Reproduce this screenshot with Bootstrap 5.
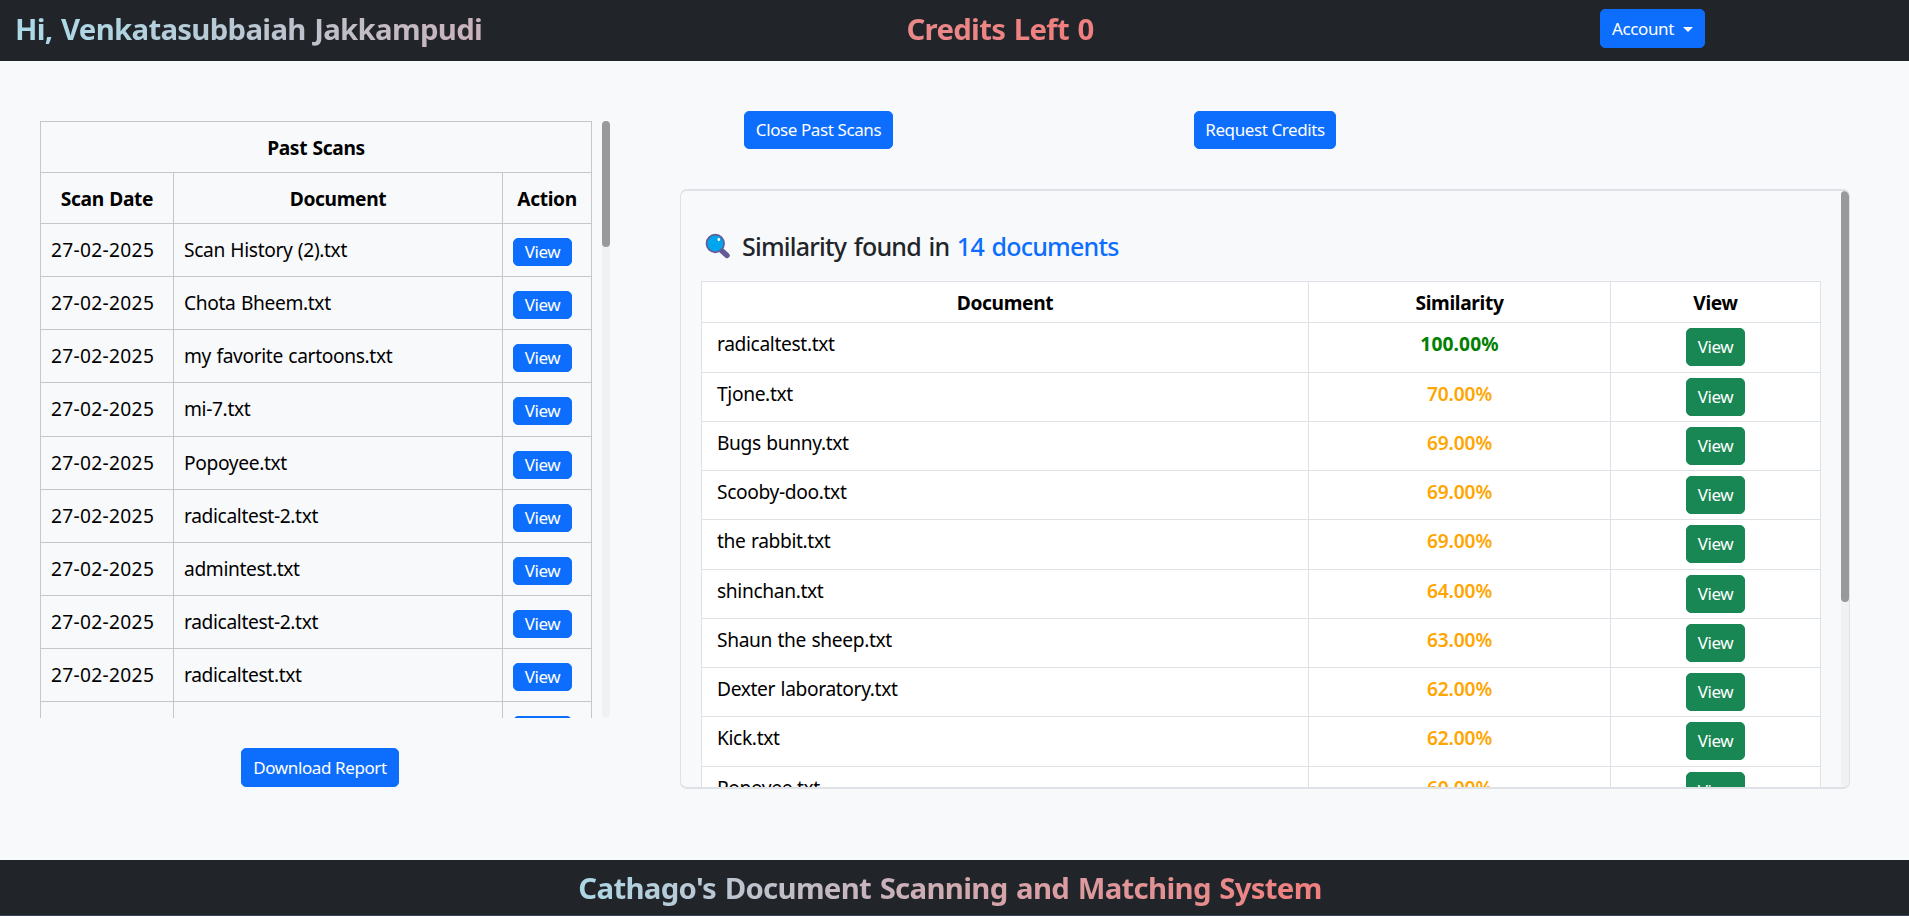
<!DOCTYPE html>
<html lang="en">
<head>
<meta charset="utf-8">
<title>Document Scanning</title>
<link rel="stylesheet" href="https://cdn.jsdelivr.net/npm/bootstrap@5.3.0/dist/css/bootstrap.min.css">
<style>
html{font-size:20px}
body{height:916px;overflow:hidden;background:#f8f9fb;font-family:"Noto Sans",sans-serif;font-size:19.2px;line-height:30px;letter-spacing:-.36px;word-spacing:.8px;color:#212529}
.topbar{height:61px}
.brand-text{font-size:29.4px;font-weight:700;line-height:36px;letter-spacing:-.72px;word-spacing:1.6px;background-image:linear-gradient(to right,lightblue 30%,lightcoral 68%);-webkit-background-clip:text;background-clip:text;color:transparent}
.topbar .brand-text{padding-top:11px}
.topbar .hello{width:636px;padding-left:15px;background-image:linear-gradient(to right,lightblue 10%,lightcoral 160%)}
.topbar .credits{width:637px;padding-left:91px;background-image:linear-gradient(to right,lightblue -150%,lightcoral 65%)}
.topbar .account{width:636px;padding-left:327px}
.btn{padding:4px 10px;font-size:17px;border-radius:5px;line-height:28px;letter-spacing:-.4px;height:38px;white-space:nowrap}
.left-col{padding-top:60px}
.past-pane{width:570px;height:597px;margin-left:40px;overflow:hidden}
.past{width:551px;table-layout:fixed;margin:0;--bs-table-bg:#f8f9fb;border-color:#c6c7c8;color:#000}
.past th,.past td{padding:11px 10px 9px;height:53px}
.past tbody tr:nth-child(4) td{height:54px}
.past th{height:51px;text-align:center}
.past td:first-child{letter-spacing:.3px}
.past .btn{height:28px;padding:0;width:59px;line-height:26px;display:block;margin-top:3px}
.track{width:8px;background:#f1f1f1;border-radius:5px}
.thumb{background:#999;border-radius:5px;width:8px}
.past-thumb{height:126px}
.sim-thumb{height:411px}
.acc{width:105px;margin-top:9px;height:39px}
.acc::after{margin-left:9px;vertical-align:3px}
.download{margin:30px 0 0 241px}
.download .btn{width:158px;height:39px}
.actions{padding:50px 0 0 134px;height:128px}
.close-scans{width:149px}
.request{width:142px;margin-left:301px}
.result{width:1170px;height:600px;margin-left:70px;border:1px solid #dee2e6;border-width:2px 1px;border-radius:7px;overflow:hidden}
.result-body{margin-left:20px}
.result h4{font-size:25px;line-height:30px;font-weight:500;letter-spacing:-.78px;word-spacing:1.8px;margin:40px 0 20px 4px}
.lens{margin-right:11px}
.sim{width:1119px;table-layout:fixed;margin:0;color:#000;--bs-table-bg:#fff}
.sim th{height:41px;padding:6px 5px 4px;text-align:center}
.sim td{height:49px;padding:6px 15px 4px}
.sim tr:nth-child(4n+1) td{height:50px}
.sim td+td{text-align:center;font-weight:600;color:orange;letter-spacing:-.15px}
.sim td.full{color:green;font-weight:700;letter-spacing:.1px}
.sim td:last-child{padding-top:5px}
.sim .btn{width:59px;padding:4px 0;display:block;margin:0 auto;font-weight:400;letter-spacing:-.4px}
.foot{height:56px;border-bottom:1px solid #3a4356}
.foot .brand-text{padding:10px 9px 0 0}
</style>
</head>
<body class="d-flex flex-column">
<nav class="topbar bg-dark d-flex flex-shrink-0">
  <div class="brand-text hello">Hi, Venkatasubbaiah Jakkampudi</div>
  <div class="brand-text credits text-center">Credits Left 0</div>
  <div class="account"><button class="btn btn-primary dropdown-toggle acc">Account</button></div>
</nav>
<main class="d-flex flex-grow-1">
  <section class="left-col">
    <div class="past-pane d-flex justify-content-between">
      <table class="table table-bordered past">
        <colgroup><col style="width:133px"><col style="width:329px"><col style="width:89px"></colgroup>
        <thead><tr><th colspan="3">Past Scans</th></tr><tr><th>Scan Date</th><th>Document</th><th>Action</th></tr></thead>
        <tbody id="pastRows"></tbody>
      </table>
      <div class="track"><div class="thumb past-thumb"></div></div>
    </div>
    <div class="download"><button class="btn btn-primary">Download Report</button></div>
  </section>
  <section>
    <div class="actions d-flex"><button class="btn btn-primary close-scans">Close Past Scans</button><button class="btn btn-primary request">Request Credits</button></div>
    <div class="result d-flex justify-content-between">
      <div class="result-body">
        <h4 class="d-flex align-items-center"><svg class="lens" width="26" height="26" viewBox="0 0 26 26"><path d="M16 17l6 5.5" stroke="#635994" stroke-width="5.4" stroke-linecap="round"/><circle cx="10.3" cy="10.5" r="8.8" fill="#00a6ed" stroke="#635994" stroke-width="1.7"/><ellipse cx="13.8" cy="6.5" rx="1.3" ry="1.7" fill="#fff"/></svg><span>Similarity found in <span class="text-primary">14 documents</span></span></h4>
        <table class="table table-bordered sim">
          <colgroup><col style="width:607px"><col style="width:302px"><col style="width:210px"></colgroup>
          <thead><tr><th>Document</th><th>Similarity</th><th>View</th></tr></thead>
          <tbody id="simRows"></tbody>
        </table>
      </div>
      <div class="track"><div class="thumb sim-thumb"></div></div>
    </div>
  </section>
</main>
<footer class="foot bg-dark flex-shrink-0"><div class="brand-text text-center">Cathago's Document Scanning and Matching System</div></footer>
<script src="https://cdn.jsdelivr.net/npm/bootstrap@5.3.0/dist/js/bootstrap.bundle.min.js"></script>
<script>
const past=['Scan History (2).txt','Chota Bheem.txt','my favorite cartoons.txt','mi-7.txt','Popoyee.txt','radicaltest-2.txt','admintest.txt','radicaltest-2.txt','radicaltest.txt'];
const pastRow=(date,n)=>`<tr><td>${date}</td><td>${n}</td><td><button class="btn btn-primary">View</button></td></tr>`;
document.getElementById('pastRows').innerHTML=past.map(n=>pastRow('27-02-2025',n)).join('')+'<tr><td></td><td></td><td><button class="btn btn-primary" aria-label="View"></button></td></tr>';
const sims=[['radicaltest.txt',100],['Tjone.txt',70],['Bugs bunny.txt',69],['Scooby-doo.txt',69],['the rabbit.txt',69],['shinchan.txt',64],['Shaun the sheep.txt',63],['Dexter laboratory.txt',62],['Kick.txt',62],['Popoyee.txt',60]];
document.getElementById('simRows').innerHTML=sims.map(([n,p])=>`<tr><td>${n}</td><td class="${p===100?'full':''}">${p.toFixed(2)}%</td><td><button class="btn btn-success">View</button></td></tr>`).join('');
</script>
</body>
</html>
